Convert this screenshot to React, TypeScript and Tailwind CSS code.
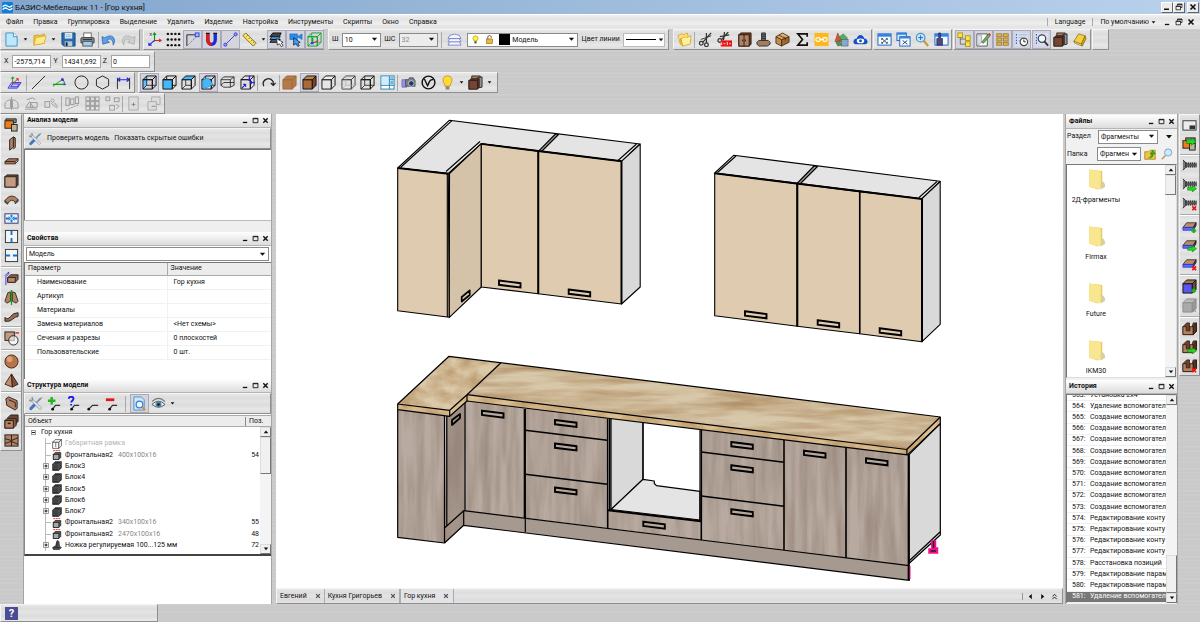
import React from "react";

type Kids = { children?: React.ReactNode };

/* ---------- textures ---------- */
const METAL =
  "bg-[#c7c7c7] bg-[repeating-linear-gradient(180deg,rgba(255,255,255,0.12)_0px,rgba(255,255,255,0.02)_2px,rgba(255,255,255,0.09)_3px,rgba(255,255,255,0.02)_5px,rgba(255,255,255,0.13)_7px,rgba(255,255,255,0.01)_9px,rgba(255,255,255,0.12)_11px)]";
const BAR =
  "bg-[#dfdfdf] bg-[repeating-linear-gradient(180deg,rgba(255,255,255,0.26)_0px,rgba(0,0,0,0.01)_4px,rgba(255,255,255,0.16)_7px,rgba(0,0,0,0.015)_11px,rgba(255,255,255,0.26)_15px)] border border-t-[#f4f4f4] border-l-[#f4f4f4] border-r-[#8f8f8f] border-b-[#8f8f8f]";

/* ---------- icon helpers ---------- */
const Cube = ({ f = "none", s = "none", t = "none", c = "#111", inner = false, children }: { f?: string; s?: string; t?: string; c?: string; inner?: boolean } & Kids) => (
  <g stroke={c} strokeWidth="1" strokeLinejoin="round">
    <path d="M1 5H11V15H1Z" fill={f} />
    <path d="M1 5L5 1H15L11 5Z" fill={t} />
    <path d="M11 5L15 1V11L11 15Z" fill={s} />
    {inner && <path d="M5 1V11H15M5 11L1 15" fill="none" strokeWidth="0.8" />}
    {children}
  </g>
);
const WinFrame = ({ children }: Kids) => (
  <g>
    <rect x="1" y="2" width="14" height="12" fill="#f4f8ff" stroke="#1a62c0" />
    <rect x="1" y="2" width="14" height="3" fill="#2f86e8" />
    {children}
  </g>
);
const Cross4 = ({ c = "#456" }: { c?: string }) => (
  <path d="M5 7L11 12M11 7L5 12M5 8.5V7H6.5M9.500 7H11V8.500M11 10.500V12H9.500M6.500 12H5V10.500" stroke={c} fill="none" strokeWidth="1" />
);
const Board = ({ children }: Kids) => (
  <g stroke="#222" strokeWidth="0.8">
    <path d="M1 9L5 4H15L12 9Z" fill="#b98a6c" />
    <path d="M12 9L15 4V7L12 12Z" fill="#5a3a28" />
    <path d="M1 9H12V12H1Z" fill="#5b6cff" stroke="#2233cc" />
    {children}
  </g>
);
const Screw = ({ children }: Kids) => (
  <g>
    <path d="M1 2L4 5V10L1 13" stroke="#222" fill="#777" />
    <path d="M4 7.500H15.500" stroke="#222" strokeWidth="5.500" strokeDasharray="1.500 0.700" />
    <path d="M4 7.500H15.500" stroke="#555" strokeWidth="3" />
    {children}
  </g>
);
const Groove = ({ children }: Kids) => (
  <g stroke="#2a1a10" strokeWidth="0.8" strokeLinejoin="round">
    <path d="M1 6L5 2H8L8 8H10L12 2H15.500V11L12 14.500H1Z" fill="#6b422d" />
    <path d="M1 6H4.500V10.500H8.500V6H12V14.500H1Z" fill="#b5805f" />
    <path d="M12 6L15.500 2V11L12 14.500Z" fill="#54321f" />
    {children}
  </g>
);
const Arrow = () => <path d="M6 11H11V9L15.500 12.500L11 16V14H6Z" fill="#1fdc1f" stroke="#0a7a0a" strokeWidth="0.6" />;
const RedX = () => <path d="M11 11L15 15M15 11L11 15" stroke="#e11" strokeWidth="1.800" fill="none" />;
const Plus = () => <path d="M12.500 10V15M10 12.500H15" stroke="#1db31d" strokeWidth="2.400" fill="none" />;
const Cabinets = () => (
  <g stroke="#222" strokeWidth="0.9">
    <path d="M4 1H13V6H4Z" fill="#b37a52" />
    <path d="M10 3L15 2V13L10 14Z" fill="#8d9494" />
    <path d="M1 6L3 4H12V13L10 15H1Z" fill="#5b2f22" />
    <rect x="1" y="6" width="9" height="9" fill="#7a4330" />
  </g>
);
const Wrench = () => (
  <g strokeLinecap="round" fill="none">
    <path d="M13 3L4 12" stroke="#7d97b5" strokeWidth="2" />
    <path d="M7 9.500L3 13.500" stroke="#3f78bd" strokeWidth="3.200" />
    <path d="M4 4L13 13" stroke="#8a939e" strokeWidth="3" />
    <path d="M4 4L13 13" stroke="#e6ebf1" strokeWidth="1.700" />
    <path d="M1.500 4.500C2.500 6.500 6 5 4.500 1.500M14.500 2L12 4" stroke="#8a939e" strokeWidth="1.300" />
  </g>
);

const G: Record<string, React.ReactNode> = {
  new: <g><path d="M2 1H10L14 5V15H2Z" fill="#bfe6fb" stroke="#3b94c4" /><path d="M10 1V5H14" fill="#fff" stroke="#3b94c4" /></g>,
  open: <g><path d="M2 14V4L7 3L8 4L13 2V12Z" fill="#f0c640" stroke="#c79a20" strokeWidth="0.800" /><path d="M2 14L4 6L15 4L13 12Z" fill="#ffe98a" stroke="#d6aa2a" strokeWidth="0.800" /></g>,
  save: <g><path d="M1 1H15V15H3L1 13Z" fill="#2669ad" stroke="#174a80" /><rect x="4" y="1" width="8" height="6" fill="#dfe9f3" /><path d="M5 3H11M5 5H11" stroke="#8aa" strokeWidth="0.700" /><rect x="4" y="10" width="8" height="5" fill="#b9c9d9" /><rect x="5" y="11" width="2" height="4" fill="#123" /></g>,
  print: <g><rect x="4" y="1" width="8" height="5" fill="#fff" stroke="#666" /><rect x="1" y="6" width="14" height="6" rx="1" fill="#7d8894" stroke="#444" /><rect x="3" y="10" width="10" height="5" fill="#9ed0f2" stroke="#555" /><path d="M3 8H13" stroke="#333" /></g>,
  undo: <path d="M1 5L2 13L9 11L6.500 9C9 6 13 7 13 14C17 7 12 1 4 6Z" fill="#5f9fe6" stroke="#2a66b0" strokeWidth="0.800" />,
  redo: <path d="M15 5L14 13L7 11L9.500 9C7 6 3 7 3 14C-1 7 4 1 12 6Z" fill="#cfcfcf" stroke="#aaa" strokeWidth="0.800" />,
  axes: <g fill="none" strokeWidth="1.200"><path d="M8 10V1M6.500 3L8 1L9.500 3" stroke="#0a9a1a" /><path d="M8 9H15M13 7.500L15 9L13 10.500" stroke="#e02020" /><path d="M8 9L2 14M2 11.500V14H5" stroke="#2222dd" /><path d="M3 1L5 4M5 1L3 4" stroke="#444" strokeWidth="0.700" /></g>,
  dots: <g fill="#111">{[2, 8, 14].map((y) => [2, 6, 10, 14].map((x) => <circle key={x + "-" + y} cx={x} cy={y} r="1.300" />))}</g>,
  corner: <g><path d="M2 15V3H12" fill="none" stroke="#222" /><path d="M3 14L13 4" stroke="#777" strokeDasharray="1.500 1" /><rect x="11" y="1" width="4" height="4" fill="#aab4ff" stroke="#3344dd" /></g>,
  magnet: <g fill="none" strokeWidth="3.600"><path d="M4 1V8C4 15 12 15 12 8V1" stroke="#1c2ccc" /><path d="M4 1V8C4 11 6 13.200 8 13.200" stroke="#e01818" /><path d="M2 1.500H6M10 1.500H14" stroke="#111" strokeWidth="1.500" /></g>,
  segment: <g><path d="M2 14L14 2" stroke="#3a3ab8" /><circle cx="2.500" cy="13.500" r="1.700" fill="#8d95ff" stroke="#33c" strokeWidth="0.800" /><circle cx="13.500" cy="2.500" r="1.700" fill="#8d95ff" stroke="#33c" strokeWidth="0.800" /></g>,
  ruler: <g><path d="M1 4L4 1L15 12L12 15Z" fill="#ffe766" stroke="#77681a" /><path d="M6 3.500L4.500 5M8.500 6L7 7.500M11 8.500L9.500 10M13 10.500L11.500 12" stroke="#554" strokeWidth="0.800" /></g>,
  layerPick: <g><path d="M1 5L4 1H13L11 5Z" fill="#444" stroke="#111" /><path d="M1 8L3 5H12L10 8Z" fill="#3a96e8" stroke="#124" /><path d="M1 11L3 8H12L10 11Z" fill="#555" stroke="#111" /><path d="M8 7L9 14L11 12.500L13 15.500L15 14.500L13 12L15 11Z" fill="#fff" stroke="#222" strokeWidth="0.800" /></g>,
  camPick: <g><path d="M2 2H10V8H2ZM10 5L15 2V8Z" fill="#2b8cf0" stroke="#135cb0" strokeWidth="0.600" /><path d="M6 6L6 14L8.500 12.500L10.500 15.500L12 14.500L10.500 12L13 11Z" fill="#38a0ff" stroke="#123" strokeWidth="0.800" /></g>,
  cubeGreen: <Cube c="#13a32b" inner><path d="M6 12L12 9" stroke="#d22" /><path d="M6 6V12" stroke="#13a32b" strokeWidth="1.500" /><path d="M4 11H7V13H4Z" fill="#33f" stroke="none" /></Cube>,
  layers: <g fill="#f3f4ff" stroke="#7f86c8"><path d="M1 14L3 10H13L15 14Z" /><path d="M1 10.500L3 7H13L15 10.500Z" /><path d="M1 7L3 3.500Q8 1 13 3.500L15 7Z" /></g>,
  bulb: <g><circle cx="8" cy="6" r="4.600" fill="#fff23a" stroke="#a58d0a" /><path d="M6 11H10V15H6Z" fill="#555" /></g>,
  bulbBig: <g><path d="M8 1C3 1 2 6 4.500 9L5.500 12H10.500L11.500 9C14 6 13 1 8 1Z" fill="#ffd83a" stroke="#c89a10" /><path d="M6 12H10V15.500H6Z" fill="#888" /></g>,
  lock: <g><path d="M5 7V4C5 0 11 0 11 4V5" fill="none" stroke="#333" strokeWidth="1.500" /><rect x="3" y="7" width="10" height="8" fill="#f3b62c" stroke="#7a5408" /></g>,
  folders: <g stroke="#d2a21c" strokeWidth="0.800"><path d="M1 4L5 2L7 3L11 1L13 11L4 13Z" fill="#ffe27a" /><path d="M4 7L9 5L10 6L15 4L14 13L6 15Z" fill="#ffef9e" /><path d="M4 7L6 15L3 12Z" fill="#f2c843" /></g>,
  scissors: <g fill="none" stroke="#333" strokeWidth="1.300"><path d="M14 1L5 11M9 1L9 12" /><circle cx="3.500" cy="12" r="2" /><circle cx="9" cy="13.500" r="2" /><path d="M3 8L14 4" strokeWidth="1" /></g>,
  scissorsBeta: <g fill="none" stroke="#333" strokeWidth="1.300"><path d="M12 0L5 8M8 0L7 9M3 5L13 3" /><circle cx="3" cy="9" r="2" /><rect x="4" y="9" width="12" height="6.500" fill="#ee1111" stroke="none" /><path d="M5 11V14M7 12.500H9M11 10.500V14M13 12.500H15" stroke="#fff" strokeWidth="0.900" /></g>,
  wardrobe: <g stroke="#33190c"><path d="M2 3L4 1H15V13L13 15H2Z" fill="#6a4430" /><rect x="2" y="3" width="11" height="12" fill="#b08468" /><path d="M7.500 3V15M6 8V10M9 8V10" /></g>,
  leg: <g stroke="#222" strokeWidth="0.900"><path d="M6 1H10V10H6Z" fill="#777" /><path d="M6 3H10M6 5H10M6 7H10" /><path d="M1 11L3 9H13L15 11V13L12 15H3L1 13Z" fill="#a57c60" /></g>,
  box: <g stroke="#472c10" strokeWidth="0.900"><path d="M1 5L7 8V15L1 12Z" fill="#c58c4e" /><path d="M7 8L15 5V11L7 15Z" fill="#9d672f" /><path d="M1 5L8 1L15 5L7 8Z" fill="#e0ae72" /><path d="M4 3.500L11 6.500V9" fill="none" /></g>,
  sigma: <path d="M13 5V2H3L8 8L3 14H13V11" fill="none" stroke="#111" strokeWidth="1.800" />,
  link: <g><rect x="0.500" y="1" width="15" height="14" fill="#ffb81c" /><g fill="none" stroke="#fff" strokeWidth="1.200"><rect x="2" y="6" width="5" height="4" rx="2" /><rect x="9" y="6" width="5" height="4" rx="2" /><path d="M5.500 8H10.500" /></g></g>,
  shapes: <g stroke="#444" strokeWidth="0.500"><path d="M4 1L8 10H1Z" fill="#e2502f" /><path d="M6 5L10 2L14 6V10L9 11Z" fill="#45b757" /><rect x="8" y="8" width="7" height="7" fill="#86a8d4" /><path d="M2 11L6 9L8 14L4 15Z" fill="#4c9a3d" /></g>,
  cloudEye: <g><path d="M3 13C-1 13 0 7 4 7C5 2 11 2 12 7C16 7 17 13 13 13Z" fill="#1450c8" /><ellipse cx="8" cy="9.500" rx="4" ry="2.500" fill="#fff" /><circle cx="8" cy="9.500" r="1.500" fill="#1450c8" /></g>,
  fit: <WinFrame><Cross4 /></WinFrame>,
  fitAll: <g><rect x="1" y="1" width="10" height="8" fill="#dce9fb" stroke="#1a62c0" /><rect x="4" y="5" width="11" height="10" fill="#f4f8ff" stroke="#1a62c0" /><path d="M4 6H15M1 2H11" stroke="#2f86e8" strokeWidth="2" /><path d="M7 9L12 13M12 9L7 13" stroke="#345" /></g>,
  zoomIn: <g><path d="M9 9L14 15" stroke="#d09a3a" strokeWidth="2.500" /><circle cx="6" cy="6" r="4.600" fill="#c7e7fb" stroke="#4a95cc" strokeWidth="1.300" /><path d="M6 3.500V8.500M3.500 6H8.500" stroke="#1a62c0" /></g>,
  brush: <WinFrame><path d="M5 1H7V7H9V14H3V7H5Z" fill="#4a4a90" stroke="#223" strokeWidth="0.700" /></WinFrame>,
  tree: <g fill="#ffe33d" stroke="#a28604" strokeWidth="0.800"><rect x="1" y="1" width="5" height="5" /><rect x="9" y="4" width="5" height="5" /><rect x="9" y="10.500" width="5" height="5" /><path d="M3.500 6V13H9M3.500 7.500H9" fill="none" stroke="#555" /></g>,
  note: <g><path d="M1 2H12V15H1Z" fill="#fff" stroke="#555" /><path d="M1 3L1 15L6 11V3Z" fill="#d8dfe8" stroke="#888" strokeWidth="0.600" /><path d="M6 11L13 2L15 4L8 12Z" fill="#5fb747" stroke="#345" strokeWidth="0.600" /><path d="M13 2L14 1L16 3L15 4Z" fill="#e22" /></g>,
  wall: <g><rect x="1" y="1" width="14" height="14" fill="#b9b9b9" /><g fill="#e4b54d" stroke="#9c741d" strokeWidth="0.700"><rect x="2" y="2" width="5" height="3" /><rect x="9" y="2" width="5" height="3" /><rect x="2" y="6.500" width="5" height="3" /><rect x="9" y="6.500" width="5" height="3" /><rect x="2" y="11" width="5" height="3" /><rect x="9" y="11" width="5" height="3" /></g></g>,
  hist: <g><rect x="1" y="1" width="14" height="14" fill="#d5def2" /><path d="M2 3H3M2 6H3M2 9H3M2 12H3" stroke="#1a3fcc" strokeWidth="1.500" /><path d="M5 3H14M5 6H9M5 9H7" stroke="#9ab" strokeWidth="0.800" /><circle cx="10.500" cy="10.500" r="4" fill="#fff" stroke="#444" strokeWidth="1.200" /><path d="M10.500 8V10.500H12.500" stroke="#222" fill="none" /></g>,
  find: <g><rect x="1" y="1" width="14" height="14" fill="#d5def2" /><path d="M2 3H3M2 6H3M2 9H3M2 12H3" stroke="#1a3fcc" strokeWidth="1.500" /><circle cx="8.500" cy="7" r="4" fill="#eef8ff" stroke="#444" strokeWidth="1.300" /><path d="M11 10L15 14.500" stroke="#333" strokeWidth="2" /></g>,
  cabinets: <Cabinets />,
  book: <g stroke="#8d6d0d" strokeWidth="0.800"><path d="M2 10L7 2L14 4L10 13Z" fill="#f4cf3f" /><path d="M2 10L10 13L11 15L3 12Z" fill="#fff6cf" /><path d="M14 4L15 7L11 15L10 13Z" fill="#d3a41a" /></g>,
  sketch: <g><path d="M1 14L5 8H15L11 14Z" fill="#c9c9ff" stroke="#3a3ad8" /><path d="M4 12.500L6 9.500H13L11 12.500Z" fill="none" stroke="#3a3ad8" /><path d="M6 10V2M4.500 4L6 2L7.500 4" stroke="#0a9a1a" fill="none" /><path d="M6 9L12 4M9.500 4H12V6.500" stroke="#e02020" fill="none" /></g>,
  line: <path d="M1 15L15 1" stroke="#222" />,
  angle: <g fill="none"><path d="M1 10H15" stroke="#18a018" strokeWidth="1.300" /><path d="M1 12L12 4" stroke="#18a018" /><path d="M11 4Q14 7 13 11" stroke="#33c" /><circle cx="11" cy="5" r="1.500" fill="#33c" /></g>,
  circle: <circle cx="8" cy="8" r="7" fill="none" stroke="#222" />,
  hexagon: <path d="M8 1L14.500 4.500V11.500L8 15L1.500 11.500V4.500Z" fill="none" stroke="#222" />,
  dim: <g fill="none"><path d="M1.500 3V15M14.500 3V15" stroke="#222" /><path d="M2 5H14M4.500 3L2 5L4.500 7M11.500 3L14 5L11.500 7" stroke="#2222dd" strokeWidth="1.200" /></g>,
  vLeft: <g><path d="M1 5L5 1V11L1 15Z" fill="#5cc3ff" /><Cube inner /></g>,
  vFront: <Cube f="#45b8fb"><path d="M5 1V5M11 11H15" /></Cube>,
  vTop: <Cube t="#45b8fb"><path d="M5 5V11H11M5 11L1 15" fill="none" strokeWidth="0.8" /></Cube>,
  vPersp: <Cube inner><path d="M2 5L8 3L13 10L7 13L2 15Z" fill="#45b8fb" stroke="#1b7fc0" strokeWidth="0.500" /></Cube>,
  vWire: <g fill="none" stroke="#222" strokeWidth="0.900"><path d="M1 5L4 2H15V11L11 13H4L1 11ZM1 5H11V13M11 5L15 2M4 8H15M1 11L4 8" /></g>,
  vMove: <Cube><path d="M10 1V6M8.500 4.500L10 6L11.500 4.500M16 8H11M12.500 6.500L11 8L12.500 9.500M2 14L6 10M3.500 10H6V12.500" fill="none" stroke="#22d" strokeWidth="1.300" /></Cube>,
  rotate: <path d="M3 12C0 5 9 1 13 7V10M10.500 8.500L13 11L15.500 8.500" fill="none" stroke="#222" strokeWidth="1.300" />,
  wood1: <Cube f="#b47b49" t="#b47b49" s="#b47b49" c="#a06a3c" />,
  wood2: <Cube f="#a9693a" t="#c3834f" s="#7e4620" />,
  box1: <Cube f="#e6e6e6" t="#eee" s="#ddd" />,
  box2: <Cube c="#444"><path d="M5 1V11H15M5 11L1 15" fill="none" stroke="#aaa" strokeWidth="0.700" /></Cube>,
  box3: <Cube inner />,
  panes: <g><rect x="1" y="1" width="14" height="14" fill="#fff" stroke="#2a7fb0" /><rect x="2" y="2" width="8" height="8" fill="#cfeefa" /><path d="M10 1V15M1 11H15M10 5H15" stroke="#2a7fb0" /><path d="M11 2H14V4H11ZM11 6H14V10H11Z" fill="#5fb9e0" /></g>,
  camera: <g><path d="M1 5H6V13H1Z" fill="#9a92e0" stroke="#6058b8" strokeWidth="0.700" /><path d="M5 5H8L9 3H13L15 6V12H5Z" fill="#7b828a" stroke="#333" strokeWidth="0.700" /><circle cx="11" cy="9" r="3" fill="#223a66" stroke="#ccc" /></g>,
  vray: <g fill="none" stroke="#111" strokeWidth="1.500"><circle cx="8" cy="8" r="6.800" /><path d="M3.500 4L7 11.500C9 9 8 4 13 5" /></g>,
  mirror: <g fill="none" stroke="#999"><path d="M8 1V15" /><path d="M7 4Q1 5 1 9V13H7ZM9 4Q15 5 15 9V13H9Z" /></g>,
  mv: <g fill="none" stroke="#999"><path d="M1 14H14M2 12L6 6L10 12Z" /><rect x="7" y="7" width="7" height="5" /><path d="M3 4L9 2L12 4" /></g>,
  rot: <g fill="none" stroke="#999"><rect x="1" y="6" width="5" height="6" /><path d="M7 5L9 3L11 5L9 7ZM8 8L14 13M11 7L15 12" /></g>,
  align: <g fill="none" stroke="#999"><path d="M1 15L15 9" strokeDasharray="2 1" /><rect x="1" y="2" width="3.500" height="8" /><rect x="6" y="3" width="3.500" height="6" /><rect x="11" y="1" width="3.500" height="7" /></g>,
  grid9: <g fill="none" stroke="#999">{[1, 6, 11].map((x) => [1, 6, 11].map((y) => <rect key={x + "-" + y} x={x} y={y} width="4" height="4" />))}</g>,
  scatter: <g fill="none" stroke="#999"><rect x="1" y="1" width="4" height="4" /><rect x="10" y="2" width="5" height="4" /><rect x="5" y="10" width="5" height="5" /><path d="M12 9L15 11L12 14" /></g>,
  doc: <g fill="#ddd" stroke="#aaa"><path d="M3 1H13V15H3Z" /><path d="M6 9H10M8 7V11" stroke="#888" /></g>,
  docs: <g fill="#ddd" stroke="#aaa"><path d="M6 1H15V9H6Z" /><path d="M2 6H11V15H2Z" /><path d="M6 11H10" stroke="#888" /></g>,
  sel: <g stroke="#222"><path d="M2 2H13V6H2Z" fill="#888" /><rect x="1" y="4" width="9" height="8" fill="#f07c16" /><rect x="8" y="8" width="6" height="7" fill="#bdb494" /></g>,
  vboard: <path d="M6 4L10 1V12L6 15Z M10 1L12 2V12L10 14" fill="#b08063" stroke="#222" />,
  hboard: <path d="M1 8L5 5H15L12 8ZM1 8V10.500H12V8M12 10.500L15 7.500V5" fill="#b5714f" stroke="#222" strokeWidth="0.900" />,
  front: <g stroke="#222"><path d="M1 4L3 2H15V13L13 15H1Z" fill="#6a4a38" /><rect x="1" y="4" width="12" height="11" fill="#c59b80" /></g>,
  arc: <path d="M1 9Q8 0 15 8L12 11Q8 6 4 12Z M1 9V11L4 13V12M15 8V10L12 12.500V11" fill="#b5805f" stroke="#222" strokeWidth="0.900" />,
  fill: <g><rect x="1" y="3" width="14" height="10" fill="#eaf4ff" stroke="#336" /><path d="M2 8H6M14 8H10M8 4V7M8 12V9" stroke="#1673d2" strokeWidth="2" /><path d="M5 6L7 8L5 10M11 6L9 8L11 10" stroke="#1673d2" fill="none" /></g>,
  splitV: <g><rect x="1.500" y="1.500" width="13" height="13" fill="#f3f6f9" stroke="#333" /><path d="M8 2V6.500M8 9.500V14" stroke="#1673d2" strokeWidth="2" /></g>,
  splitH: <g><rect x="1.500" y="1.500" width="13" height="13" fill="#f3f6f9" stroke="#333" /><path d="M2 8H6.500M9.500 8H14" stroke="#1673d2" strokeWidth="2" /></g>,
  plank: <g stroke="#222" strokeWidth="0.900"><path d="M4 7L7 4H15V9L12 12H4Z" fill="#8a5c41" /><rect x="4" y="7" width="8" height="5" fill="#bb8667" /><path d="M1 5L5 1V3L2 6V15" fill="none" stroke="#22c" /></g>,
  mirrorG: <g stroke="#222" strokeWidth="0.900"><path d="M7 2L4 3L1 12L3 14L7 12ZM9 2L12 3L15 12L13 14L9 12Z" fill="#b5805f" /><path d="M8 0V16" stroke="#13a313" strokeWidth="1.500" /></g>,
  wave: <path d="M1 9Q4 12 7 8T15 4V8Q12 8 9 11T1 13Z" fill="#a06c4c" stroke="#222" />,
  cut: <g stroke="#222"><rect x="1" y="1" width="10" height="9" fill="#c59b80" /><circle cx="10" cy="10" r="5" fill="#fff" fillOpacity=".6" /><path d="M12 2H16" stroke="#d22" strokeWidth="1.500" /></g>,
  sphere: <g><circle cx="8" cy="8" r="7" fill="#b5754a" stroke="#4a2a16" /><circle cx="6" cy="5.500" r="3" fill="#dba27a" /></g>,
  pyramid: <g stroke="#33190c" strokeWidth="0.900"><path d="M8 1L1 12L9 15Z" fill="#c08c6c" /><path d="M8 1L15 12L9 15Z" fill="#7d523a" /></g>,
  panel: <path d="M2 3L5 1L14 5V13L12 15L3 10Z M5 4L12 7V12" fill="#b5805f" stroke="#222" />,
  drawer: <g stroke="#222"><path d="M4 4L7 1H15V8L12 11H4Z" fill="#70452f" /><path d="M1 7L3 5H13V12L10 15H1Z" fill="#8a5a3c" /><rect x="1" y="7" width="9" height="8" fill="#b5805f" /><path d="M4 10H7" strokeWidth="1.500" /></g>,
  crate: <g stroke="#222"><rect x="1" y="2" width="14" height="12" fill="#b5805f" /><path d="M8 2V14M1 6L8 8L15 5M1 11L8 9L15 12" fill="none" /></g>,
  screenR: <g><rect x="1" y="4" width="14" height="10" fill="#ececec" stroke="#333" /><rect x="8" y="9" width="6" height="4" fill="#333" /></g>,
  orangeGo: <g stroke="#222"><rect x="4" y="2" width="10" height="10" fill="#888" /><rect x="1" y="5" width="9" height="8" fill="#f07c16" /><rect x="8" y="8" width="6" height="7" fill="#bdb494" /><path d="M5 4H10V2L15 6L10 10V8H5Z" fill="#1fdc1f" stroke="#0a7a0a" strokeWidth="0.600" /></g>,
  screw: <Screw />, screwGo: <Screw><Arrow /></Screw>, screwX: <Screw><RedX /></Screw>,
  board: <Board><Plus /></Board>, boardGo: <Board><Arrow /></Board>, boardX: <Board><RedX /></Board>,
  blueCube: <Cube f="#5a55ee" t="#a57455" s="#6a4a38"><Plus /></Cube>,
  grayCube: <Cube f="#aaa" t="#bbb" s="#999" c="#8d8d8d"><path d="M12 12L15 15M15 12L12 15" /></Cube>,
  groove: <Groove />, grooveGo: <Groove><Arrow /></Groove>, grooveX: <Groove><RedX /></Groove>,
  wrench: <Wrench />,
  addN: <g fill="none"><path d="M5 1V9M1 5H9" stroke="#23b523" strokeWidth="2.600" /><path d="M6 14L9 10H14" stroke="#333" strokeWidth="1.300" /><circle cx="6" cy="14" r="1.500" fill="#111" /></g>,
  askN: <g fill="none"><path d="M3 3C3 0 8 0 8 3C8 5 5.500 5 5.500 7M5.500 8.500V10" stroke="#1a1aee" strokeWidth="2" /><path d="M6 14L9 10H14" stroke="#333" strokeWidth="1.300" /><circle cx="6" cy="14" r="1.500" fill="#111" /></g>,
  nodeN: <g fill="none"><path d="M4 14L8 10H14" stroke="#333" strokeWidth="1.300" /><circle cx="4" cy="14" r="1.500" fill="#111" /></g>,
  delN: <g fill="none"><path d="M2 4H11" stroke="#e01818" strokeWidth="3" /><path d="M6 14L9 10H14" stroke="#333" strokeWidth="1.300" /><circle cx="6" cy="14" r="1.500" fill="#111" /></g>,
  preview: <g><path d="M2 1H10L13 4V15H2Z" fill="#cfe6fa" stroke="#4a90c8" /><circle cx="8" cy="9" r="3.600" fill="#e8f6ff" stroke="#3a7fc0" strokeWidth="1.300" /><path d="M11 12L14 15" stroke="#e08a2a" strokeWidth="2" /></g>,
  eye: <g><path d="M1 9Q8 2 15 9Q8 15 1 9Z" fill="#e8eef2" stroke="#555" /><circle cx="8" cy="9" r="3.200" fill="#4c87a8" /><circle cx="8" cy="9" r="1.300" fill="#111" /><path d="M1 6Q8 -1 15 6" fill="none" stroke="#777" strokeWidth="1.300" /></g>,
  upFolder: <g><path d="M1 5H6L8 3H15V15H1Z" fill="#f2c640" stroke="#a27d14" /><path d="M6 13Q10 13 10 8H8L11.500 3L15 8H12.500Q12 14 6 13Z" fill="#27b327" stroke="#0a6a0a" strokeWidth="0.500" /></g>,
  magnify: <g><path d="M6 10L1 15" stroke="#c79a5a" strokeWidth="2.200" /><circle cx="9.500" cy="6" r="4.800" fill="#cfe9fc" stroke="#7ba3c8" strokeWidth="1.300" /></g>,
  folder: <g><path d="M3 1L12 2V13L9 15L3 13Z" fill="#e8cc5a" /><path d="M3 1L11 2.500V15L3 13Z" fill="#f8e691" /><path d="M11 9Q14 9 14 13L11 15Z" fill="#d9cf9c" /></g>,
  treeFrame: <Cube f="#fff" t="#fff" s="#fff" c="#222"><path d="M6 6V13" /></Cube>,
  treePanel: <g><path d="M2 1H14" stroke="#e22" strokeWidth="1.500" strokeDasharray="3 1" /><path d="M2 7L5 4H14V12L11 15H2Z" fill="#555" stroke="#111" /><rect x="2" y="7" width="9" height="8" fill="#a7a7a7" stroke="#111" /></g>,
  treeBlock: <g><path d="M1 5L5 1H15V11L11 15H1Z" fill="#333" stroke="#111" /><path d="M1 5H11L15 1M11 5V15M1 8H11L15 4M1 11.500H11L15 7.500" stroke="#777" strokeWidth="0.800" fill="none" /></g>,
  treeLeg: <path d="M8 1L11 2L12 10L15 12L12 15H2L1 12L6 9Z M8 3V11M3 12H12" fill="#555" stroke="#111" />,
  logo: <g><rect width="16" height="16" rx="2" fill="#0f7fd6" /><path d="M1 7Q4 3 8 6T15 5M1 11Q4 7 8 10T15 9" fill="none" stroke="#fff" strokeWidth="1.800" /></g>,
  min: <path d="M2 12.500H12" stroke="#111" strokeWidth="3" />,
  max: <path d="M2.500 3H13.500V13H2.500ZM2 4H14" fill="none" stroke="#111" strokeWidth="2" />,
  restore: <path d="M5 5V2H14V9H11M2 6H11V13.500H2ZM2 7H11M5 3H14" fill="none" stroke="#111" strokeWidth="1.500" />,
  close: <path d="M3 3L13 13M13 3L3 13" stroke="#111" strokeWidth="3.200" />,
  down: <path d="M2 4H14L8 11Z" fill="#111" />,
  up: <path d="M2 11H14L8 4Z" fill="#111" />,
  left: <path d="M11 2V14L4 8Z" fill="#111" />,
  right: <path d="M5 2V14L12 8Z" fill="#111" />,
  dblUp: <path d="M3 8L8 3L13 8M3 14L8 9L13 14" fill="none" stroke="#111" strokeWidth="2" />,
};

const Ico = ({ n, className = "size-4" }: { n: string; className?: string }) => (
  <svg viewBox="0 0 16 16" className={className + " shrink-0"} aria-hidden="true">{G[n]}</svg>
);

const TB = ({ n, label, on }: { n: string; label: string; on?: boolean }) => (
  <button type="button" aria-label={label} className={"flex h-[19px] w-[19px] shrink-0 items-center justify-center border " + (on ? "border-[#a9a9bb] bg-[#d4d4dc]" : "border-transparent")}>
    <Ico n={n} className="size-[15px]" />
  </button>
);
const Drop = ({ label }: { label: string }) => (
  <button type="button" aria-label={label} className="flex h-4 w-2 shrink-0 items-center justify-center"><Ico n="down" className="size-[5px]" /></button>
);
const Sep = () => <span className="h-4 w-px shrink-0 bg-[#aaa]" />;
const HSep = () => <span className="my-px h-[2px] w-full shrink-0 border-t border-t-[#aaa] bg-white" />;

const Select = ({ label, value, className = "", muted, left }: { label: string; value: string; className?: string; muted?: boolean; left?: React.ReactNode }) => (
  <div className={"flex h-[14px] items-center border border-[#8a8a8a] " + (muted ? "bg-[#ececec] text-[#8a8a8a] " : "bg-white ") + className}>
    {left}
    <select aria-label={label} disabled={muted} defaultValue={value} className="h-3 min-w-0 flex-1 appearance-none bg-transparent pl-[2px] leading-[10px] outline-none">
      <option value={value}>{value}</option>
    </select>
    <Ico n="down" className="mx-[2px] size-[7px]" />
  </div>
);

const PanelHead = ({ title }: { title: string }) => (
  <header className="flex h-[14px] shrink-0 items-center border-b border-[#b5b5b5] bg-linear-to-b from-white to-[#dcdcdc] pr-[2px] pl-[3px]">
    <h2 className="flex-1 font-bold">{title}</h2>
    <div className="flex gap-[3px]">
      <button type="button" aria-label="Свернуть"><Ico n="min" className="size-[7px]" /></button>
      <button type="button" aria-label="Развернуть"><Ico n="max" className="size-[7px]" /></button>
      <button type="button" aria-label="Закрыть"><Ico n="close" className="size-[7px]" /></button>
    </div>
  </header>
);

const Scroll = ({ thumb }: { thumb: string }) => (
  <div className="flex w-[11px] shrink-0 flex-col bg-[#f4f4f4]">
    <button type="button" aria-label="Вверх" className="flex h-[10px] items-center justify-center border border-[#ddd] border-r-[#777] border-b-[#777] bg-[#f0f0f0]"><Ico n="up" className="size-[6px]" /></button>
    <div className="flex flex-1 flex-col"><div className={"border border-[#ddd] border-r-[#777] border-b-[#777] bg-[#f0f0f0] " + thumb} /></div>
    <button type="button" aria-label="Вниз" className="flex h-[10px] items-center justify-center border border-[#ddd] border-r-[#777] border-b-[#777] bg-[#f0f0f0]"><Ico n="down" className="size-[6px]" /></button>
  </div>
);

/* ---------- furniture drawing ---------- */
const Handle = ({ x, y, fill = "#dfccb0" }: { x: number; y: number; fill?: string }) => (
  <path d={`M${x} ${y}l21.500 2.700v4.300l-21.500 -2.700z`} fill={fill} stroke="#000" strokeWidth="1.900" />
);

const Kitchen = () => (
  <svg viewBox="276 114 787 473" className="block h-auto w-full bg-white" role="img" aria-label="Модель кухни">
    <defs>
      <filter id="oak" x="0" y="0" width="100%" height="100%" colorInterpolationFilters="sRGB">
        <feTurbulence type="fractalNoise" baseFrequency="0.120 0.012" numOctaves="3" seed="4" result="n" />
        <feColorMatrix in="n" type="matrix" values="0 0 0 0 0.540  0 0 0 0 0.470  0 0 0 0 0.420  1.100 0 0 0 -0.350" result="c" />
        <feComposite in="c" in2="SourceAlpha" operator="in" result="m" />
        <feMerge><feMergeNode in="SourceGraphic" /><feMergeNode in="m" /></feMerge>
      </filter>
      <filter id="stone" x="0" y="0" width="100%" height="100%" colorInterpolationFilters="sRGB">
        <feTurbulence type="fractalNoise" baseFrequency="0.014 0.120" numOctaves="4" seed="9" result="n" />
        <feColorMatrix in="n" type="matrix" values="0 0 0 0 0.700  0 0 0 0 0.570  0 0 0 0 0.410  1.800 0 0 0 -0.560" result="c" />
        <feComposite in="c" in2="SourceAlpha" operator="in" result="m" />
        <feMerge><feMergeNode in="SourceGraphic" /><feMergeNode in="m" /></feMerge>
      </filter>
      <filter id="stoneSpot" x="0" y="0" width="100%" height="100%" colorInterpolationFilters="sRGB">
        <feTurbulence type="fractalNoise" baseFrequency="0.050 0.080" numOctaves="4" seed="3" result="n" />
        <feColorMatrix in="n" type="matrix" values="0 0 0 0 0.710  0 0 0 0 0.570  0 0 0 0 0.400  1.700 0 0 0 -0.560" result="c" />
        <feComposite in="c" in2="SourceAlpha" operator="in" result="m" />
        <feMerge><feMergeNode in="SourceGraphic" /><feMergeNode in="m" /></feMerge>
      </filter>
    </defs>

    {/* upper corner section */}
    <g stroke="#000" strokeWidth="1.100" strokeLinejoin="round">
      <path d="M449.300 120.300L640 144L621.700 161.300L481.300 143.700L448.300 173.500L397.700 168Z" fill="#e4e4e4" />
      <path d="M397.700 168L448.300 173.500L449.300 317.300L397.700 310.700Z" fill="#dfccb0" />
      <path d="M449.500 173.500L481.300 143.700V287L449.300 317.300Z" fill="#d4c2a9" />
      <path d="M481.300 143.700L538.300 151.300V293.700L481.300 287Z" fill="#dfccb0" />
      <path d="M538.300 151.300L621.500 161.300V304L538.300 293.700Z" fill="#dfccb0" />
      <path d="M621.500 161.300L640.200 144V287L621.500 304Z" fill="#d9d9d9" />
      <path d="M447.300 174V317M400.500 167.500L452 120.700M618 160.500L636.500 144M446 171.500L480 141.500" fill="none" />
      <path d="M538.300 151.300L555.500 134L558.500 134.500L541.500 151.500Z" fill="#999" />
      <path d="M397.700 168L448.300 173.700M481.300 143.900L621.500 161.300M538.300 151.300V293.700M621.500 161.300V304" fill="none" strokeWidth="1.900" />
      <path d="M461.700 297L469.700 290.300V295L461.700 301.500Z" fill="#d4c2a9" strokeWidth="1.700" />
    </g>
    <Handle x={499} y={280.500} /><Handle x={568.700} y={289.500} />

    {/* upper straight section */}
    <g stroke="#000" strokeWidth="1.100" strokeLinejoin="round">
      <path d="M733.700 155.300L940 181.300L922 198.700L714.700 173Z" fill="#e4e4e4" />
      <path d="M714.700 173.200L797.300 183.700V326.300L714.700 315.700Z" fill="#dfccb0" />
      <path d="M797.300 183.700L859.700 191.700V333.700L797.300 326.300Z" fill="#dfccb0" />
      <path d="M859.700 191.700L922 198.700V341.700L859.700 333.700Z" fill="#dfccb0" />
      <path d="M922 198.700L940.200 181.500V324.300L922 341.700Z" fill="#d9d9d9" />
      <path d="M717.500 172.500L736 156M919 197.500L937 181.500" fill="none" />
      <path d="M797 183.500L814 166L817.500 166.500L800 184Z" fill="#999" />
      <path d="M714.700 173.300L922 198.900V341.700M797.300 183.700V326.300" fill="none" strokeWidth="2" />
      <path d="M859.700 191.700V333.700" strokeWidth="1.500" />
    </g>
    <Handle x={745} y={311.300} /><Handle x={817.700} y={320.300} /><Handle x={879.700} y={328.300} />

    {/* base units */}
    <g filter="url(#oak)" fill="#b8aaa0">
      <path d="M397.700 409.700L445.500 415.500L444.500 543L397.700 537.300Z" />
      <path d="M446 416L466 401V511L463.700 525.300L444.500 543Z" fill="#a4958b" />
      <path d="M465 400L608 418V528L465 511Z" />
      <path d="M608 510.300L701 521V540L608 528Z" />
      <path d="M701 429.700L908.700 455V566L701 540Z" />
    </g>
    <path d="M463.700 510.700L909.300 565.700V580.300L463.700 525.300Z" fill="#a69990" />
    <g stroke="#000" strokeWidth="1.200" fill="none" strokeLinejoin="round">
      <path d="M611 417L643 421V479.500L611 510Z" fill="#d9d9d9" />
      <path d="M643 479.300L654.300 481V483.500L656.500 485.700L700 491.300V520L611 509.500Z" fill="#e4e4e4" />
      <path d="M643 420V479.500M700 430V520" />
      <path d="M397.700 409.700V537.300L444.500 543L463.700 525.300L909.300 580.300V565.700L463.700 510.700L444.500 528" />
      <path d="M444.500 416V543M446.800 416V526M465 401V511M463.700 511V525M525.300 409V532.300" />
      <path d="M524.500 409V518M607.700 419V528M609.700 419V510M701.300 430V540M784 440V550M846 447V558" strokeWidth="1.600" />
      <path d="M525.300 430.300L607.300 440.300M525.300 474.300L607.300 484.300M701.300 452L784 462.300M701.300 496L784 506.300" strokeWidth="1.500" />
      <path d="M608 510.300L701 521.300" strokeWidth="1.900" />
      <path d="M909 454.700L940.300 423.500V535L909 563.500Z" fill="#d9d9d9" />
      <path d="M909 561L940 532" />
      <path d="M908.700 454V580" strokeWidth="2.100" />
      <path d="M452 420L460 414V418L452 425Z" strokeWidth="1.800" />
    </g>
    <Handle x={482} y={410.700} fill="#b5a79d" />
    <Handle x={555} y={420} fill="#b5a79d" /><Handle x={555} y={443.500} fill="#b5a79d" /><Handle x={555} y={487.500} fill="#b5a79d" />
    <Handle x={643.300} y={521.700} fill="#b5a79d" />
    <Handle x={731.300} y={442} fill="#b5a79d" /><Handle x={731.300} y={465.300} fill="#b5a79d" /><Handle x={731.300} y={509.300} fill="#b5a79d" />
    <Handle x={804} y={450.700} fill="#b5a79d" /><Handle x={866} y={458.300} fill="#b5a79d" />
    <path d="M931.500 541H935.500V548H937.500V553H929V549H932Z" fill="#f0128c" stroke="#f0128c" strokeWidth="1.500" />
    <path d="M933.500 541V548M930.500 551H936" stroke="#222" strokeWidth="1.500" />
    <path d="M910 566V579" stroke="#f0128c" strokeWidth="1" />

    {/* worktops */}
    <path d="M449 356.300L500.700 363L467 394.700L449.700 410.300L397.700 404Z" fill="#dbc9a8" filter="url(#stoneSpot)" />
    <path d="M500.700 363L940.300 417L906.700 449.500L467 394.700Z" fill="#d8c8aa" filter="url(#stone)" />
    <path d="M397.700 404L449.700 410.300L467 394.700L906.700 449.500L940.300 417V423.500L907.500 454.900L467 401L449.700 416.300L397.700 409.700Z" fill="#dcbf90" filter="url(#stoneSpot)" />
    <g stroke="#000" strokeWidth="1.200" fill="none" strokeLinejoin="round">
      <path d="M449 356.300L940.300 417V423.500L907.500 454.900L467 401L449.700 416.300L397.700 409.700V404Z" />
      <path d="M397.700 404L449.700 410.300L467 394.700L500.700 363M467 394.700L906.700 449.500L940.300 417M449.700 410.300V416.300M467 394.700V401M906.900 449.500V455" />
    </g>
  </svg>
);

/* ---------- data ---------- */
const MENU = ["Файл", "Правка", "Группировка", "Выделение", "Удалить", "Изделие", "Настройка", "Инструменты", "Скрипты", "Окно", "Справка"];
const PROPS: [string, string][] = [
  ["Наименование", "Гор кухня"], ["Артикул", ""], ["Материалы", ""], ["Замена материалов", "<Нет схемы>"], ["Сечения и разрезы", "0 плоскостей"], ["Пользовательские", "0 шт."],
];
type Node = { icon: string; name: string; size?: string; pos?: string; plus?: boolean; dim?: boolean };
const TREE: Node[] = [
  { icon: "treeFrame", name: "Габаритная рамка", dim: true },
  { icon: "treePanel", name: "Фронтальная2", size: "400x100x16", pos: "54" },
  { icon: "treeBlock", name: "Блок3", plus: true },
  { icon: "treeBlock", name: "Блок4", plus: true },
  { icon: "treeBlock", name: "Блок5", plus: true },
  { icon: "treeBlock", name: "Блок6", plus: true },
  { icon: "treeBlock", name: "Блок7", plus: true },
  { icon: "treePanel", name: "Фронтальная2", size: "340x100x16", pos: "55" },
  { icon: "treePanel", name: "Фронтальная2", size: "2470x100x16", pos: "48" },
  { icon: "treeLeg", name: "Ножка регулируемая 100...125 мм", pos: "72", plus: true },
];
const HISTORY: [number, string][] = [
  [563, "Установка 2x4"], [564, "Удаление вспомогател"],
  ...[565, 566, 567, 568, 569, 570, 571, 572, 573].map((n): [number, string] => [n, "Создание вспомогател"]),
  ...[574, 575, 576, 577].map((n): [number, string] => [n, "Редактирование конту"]),
  [578, "Расстановка позиций"], [579, "Редактирование парам"], [580, "Редактирование парам"], [581, "Удаление вспомогател"],
];
const LEFT_BAR = ["sel", "vboard", "hboard", "front", "arc", "fill", "splitV", "splitH", "|", "plank", "mirrorG", "wave", "|", "cut", "|", "sphere", "pyramid", "|", "panel", "drawer", "crate"];
const RIGHT_BAR = ["screenR", "orangeGo", "|", "screw", "screwGo", "screwX", "|", "board", "boardGo", "boardX", "|", "blueCube", "grayCube", "|", "groove", "grooveGo", "grooveX"];

const Coord = ({ axis, value, id }: { axis: string; value: string; id: string }) => (
  <div className="flex items-center gap-1">
    <label htmlFor={id}>{axis}</label>
    <input id={id} defaultValue={value} className="h-[13px] w-[39px] border border-[#a5a5a5] bg-white pl-px outline-none" />
  </div>
);

const Strip = ({ items, label, className }: { items: string[]; label: string; className: string }) => (
  <nav aria-label={label} className={"flex shrink-0 flex-col items-center self-start " + BAR + " " + className}>
    {items.map((n, i) => (n === "|" ? <HSep key={i} /> : (
      <button key={i} type="button" aria-label={label + " " + (i + 1)} className="flex w-full flex-1 items-center justify-center"><Ico n={n} className="size-[15px]" /></button>
    )))}
  </nav>
);

const Group = ({ children, className = "" }: { className?: string } & Kids) => (
  <div className={"flex h-[21px] shrink-0 items-center justify-between px-px " + BAR + " " + className}>{children}</div>
);

export default function App() {
  return (
    <div className={"flex min-h-screen flex-col overflow-hidden font-['Roboto',sans-serif] text-[7px] leading-[9px] text-[#111] " + METAL}>
      <header className="flex h-[14px] shrink-0 items-center gap-[2px] bg-linear-to-r from-[#83a6cc] to-[#b9d1eb] pr-px pl-[2px]">
        <Ico n="logo" className="size-[11px]" />
        <h1 className="flex-1 text-[8px]">БАЗИС-Мебельщик 11 - [Гор кухня]</h1>
        {["min", "restore", "close"].map((n) => (
          <button key={n} type="button" aria-label={n} className="-ml-[2px] flex h-[11px] w-3 items-center justify-center border border-white border-r-[#666] border-b-[#666] bg-[#ececec] last:ml-0"><Ico n={n} className="size-2" /></button>
        ))}
      </header>

      <nav aria-label="Меню" className="flex h-[15px] shrink-0 items-center border-t border-white bg-[#e6e6e6] bg-[repeating-linear-gradient(180deg,rgba(255,255,255,0.4)_0px,rgba(0,0,0,0.01)_4px,rgba(255,255,255,0.3)_8px)] pr-[5px] pl-[6px]">
        <ul className="flex gap-[10px]">{MENU.map((m) => <li key={m}><a href="#menu">{m}</a></li>)}</ul>
        <div className="ml-auto flex items-center gap-[7px]">
          <span className="h-2 w-px bg-[#aaa]" /><a href="#lang">Language</a><span className="h-2 w-px bg-[#aaa]" />
          <button type="button" className="mr-px flex items-center gap-[2px]">По умолчанию <Ico n="down" className="size-[5px]" /></button>
          <div className="flex items-center gap-1"><Ico n="min" className="size-[7px]" /><Ico n="restore" className="size-2" /><Ico n="close" className="size-2" /></div>
        </div>
      </nav>

      <div className="flex h-[22px] shrink-0 items-start gap-px overflow-hidden">
        <Group className="w-[140px]">
          <TB n="new" label="Создать" /><Drop label="Создать: ещё" /><TB n="open" label="Открыть" /><Drop label="Открыть: ещё" />
          <TB n="save" label="Сохранить" /><TB n="print" label="Печать" /><Sep /><TB n="undo" label="Отменить" /><TB n="redo" label="Вернуть" />
        </Group>
        <Group className="ml-[2px] w-[181px]">
          <TB n="axes" label="Оси" /><TB n="dots" label="Сетка" /><TB n="corner" label="Углы" on /><TB n="magnet" label="Привязка" on /><TB n="segment" label="Отрезок" on />
          <TB n="ruler" label="Линейка" /><Drop label="Линейка: ещё" /><TB n="layerPick" label="Выбор слоя" on /><TB n="camPick" label="Выбор вида" on /><TB n="cubeGreen" label="Габарит" on />
        </Group>
        <Group className="ml-[3px] w-[341px] pr-[3px] pl-[3px]">
          <span>Ш</span><Select label="Ширина" value="10" className="w-[39px]" />
          <span>ШС</span><Select label="Ширина слоя" value="32" muted className="w-[39px]" />
          <Sep /><TB n="layers" label="Слои" />
          <Select label="Слой" value="Модель" className="w-[111px]" left={<span className="flex items-center gap-[5px] pl-[3px]"><Ico n="bulb" className="size-[9px]" /><Ico n="lock" className="size-[9px]" /><span className="size-[11px] bg-black" /></span>} />
          <span>Цвет линии</span>
          <button type="button" aria-label="Цвет линии" className="flex h-[14px] w-[42px] items-center gap-[2px] border border-[#bbb] bg-white pl-[2px]"><span className="h-px flex-1 bg-black" /><Ico n="down" className="size-[6px]" /></button>
        </Group>
        <Group className="ml-[3px] w-[199px]">
          <TB n="folders" label="Папки" /><Sep /><TB n="scissors" label="Раскрой" /><TB n="scissorsBeta" label="Раскрой бета" /><TB n="wardrobe" label="Шкаф" /><TB n="leg" label="Опора" />
          <TB n="box" label="Упаковка" /><TB n="sigma" label="Смета" /><TB n="link" label="Связь" /><TB n="shapes" label="Фигуры" /><TB n="cloudEye" label="Облако" />
        </Group>
        <Group className="w-[79px]"><TB n="fit" label="Вписать" /><TB n="fitAll" label="Вписать всё" /><TB n="zoomIn" label="Увеличить" /><TB n="brush" label="Обновить" /></Group>
        <Group className="w-[138px]">
          <TB n="tree" label="Структура" on /><TB n="note" label="Свойства" on /><TB n="wall" label="Материалы" on /><TB n="hist" label="История" on /><TB n="find" label="Анализ" on /><TB n="cabinets" label="Библиотека" /><TB n="book" label="Справочник" />
        </Group>
        <Group className="w-[17px]" />
      </div>

      <Group className="w-[155px] pr-1 pl-[3px]"><Coord axis="X" value="-2575,714" id="cx" /><Coord axis="Y" value="14341,692" id="cy" /><Coord axis="Z" value="0" id="cz" /></Group>

      <div className="flex h-[21px] shrink-0 items-start">
        <Group className="w-[135px] pl-1"><TB n="sketch" label="Эскиз" /><Sep /><TB n="line" label="Линия" /><TB n="angle" label="Угол" /><TB n="circle" label="Окружность" /><TB n="hexagon" label="Многоугольник" /><TB n="dim" label="Размер" /></Group>
        <Group className="ml-[3px] w-[360px] pr-[3px]">
          <TB n="vLeft" label="Слева" on /><TB n="vFront" label="Спереди" /><TB n="vTop" label="Сверху" /><TB n="vPersp" label="Аксонометрия" on /><TB n="vWire" label="Перспектива" /><TB n="vMove" label="Ориентация" />
          <Sep /><TB n="rotate" label="Поворот" /><Sep /><TB n="wood1" label="Текстура" /><TB n="wood2" label="Текстура с рёбрами" on /><TB n="box1" label="Без линий" /><TB n="box2" label="Невидимые линии" /><TB n="box3" label="Каркас" />
          <TB n="panes" label="Виды" /><Sep /><TB n="camera" label="Камера" /><TB n="vray" label="Рендер" /><TB n="bulbBig" label="Свет" /><Drop label="Свет: ещё" /><TB n="cabinets" label="Сцена" /><Drop label="Сцена: ещё" />
        </Group>
      </div>
      <Group className="w-[165px]"><TB n="mirror" label="Симметрия" /><TB n="mv" label="Сдвиг" /><TB n="rot" label="Вращение" /><Sep /><TB n="align" label="Выравнивание" /><TB n="grid9" label="Массив" /><TB n="scatter" label="Разнести" /><Sep /><TB n="doc" label="Лист" /><TB n="docs" label="Листы" /></Group>

      <main className="flex flex-1 items-stretch">
        <Strip items={LEFT_BAR} label="Панели" className="h-[337px] w-[22px]" />

        <aside className="ml-px flex w-[249px] shrink-0 flex-col border-x border-[#a5a5a5] bg-white">
          <section className="flex h-[118px] shrink-0 flex-col">
            <PanelHead title="Анализ модели" />
            <div className={"flex h-[21px] items-center gap-[5px] px-[3px] " + BAR}>
              <Ico n="wrench" className="size-[14px]" /><button type="button">Проверить модель</button><button type="button">Показать скрытые ошибки</button>
            </div>
            <div className="flex-1 border-t border-l border-[#777] bg-white" />
            <div className="h-[12px] border-t border-[#bbb] bg-[#efefef]" />
          </section>
          <section className="flex h-[147px] shrink-0 flex-col">
            <PanelHead title="Свойства" />
            <Select label="Объект" value="Модель" className="m-px mx-[2px]" />
            <div className="flex-1 border-t border-l border-[#777]">
              <table className="w-full table-fixed border-collapse text-left">
                <thead><tr className="h-3 bg-[#ececec]"><th className="w-[142px] border-r border-b border-[#aaa] pl-[3px] font-normal">Параметр</th><th className="border-b border-[#aaa] pl-[3px] font-normal">Значение</th></tr></thead>
                <tbody>{PROPS.map(([k, v]) => <tr key={k} className="h-[14px] border-b border-[#f1f1f1]"><td className="border-r border-[#f1f1f1] pl-3">{k}</td><td className="pl-[6px]">{v}</td></tr>)}</tbody>
              </table>
            </div>
          </section>
          <section className="flex shrink-0 flex-col">
            <PanelHead title="Структура модели" />
            <div className={"flex h-[21px] items-center px-px " + BAR}>
              <TB n="wrench" label="Настройка" /><TB n="addN" label="Добавить" /><TB n="askN" label="Найти" /><TB n="nodeN" label="Узел" /><TB n="delN" label="Удалить" />
              <span className="mx-1 flex"><Sep /></span><TB n="preview" label="Просмотр" on /><TB n="eye" label="Видимость" /><Drop label="Видимость: ещё" />
            </div>
            <div className="border-b-2 border-l border-b-[#444] border-l-[#888] pt-px">
              <div className="flex h-[12px] items-center border-y border-[#aaa] bg-[#ececec]"><span className="flex-1 pl-[3px]">Объект</span><span className="w-[26px] border-l border-[#888] pl-[3px]">Поз.</span></div>
              <div className="flex h-[127px]">
                <div className="flex min-w-0 flex-1 flex-col pb-[3px]">
                  <div className="flex flex-1 items-center gap-[5px] pl-[6px]"><span className="flex size-[5px] items-center border border-[#999]"><span className="h-px w-full bg-[#222]" /></span><span>Гор кухня</span></div>
                  <ul className="flex flex-[10] flex-col bg-[linear-gradient(#bbb,#bbb)] bg-[length:1px_100%] bg-[position:20px_0px] bg-no-repeat">
                    {TREE.map((t, i) => (
                      <li key={i} className="flex flex-1 items-center pl-[18px]">
                        <span className="mr-px flex w-[8px] items-center">
                          {t.plus ? <svg viewBox="0 0 7 7" className="size-[7px]" aria-hidden="true"><path d="M.5 .5H5.500V5.500H.5Z" fill="#fff" stroke="#999" /><path d="M1.500 3H4.500M3 1.500V4.500" stroke="#111" /></svg> : <span className="ml-[2px] h-px w-full bg-[#bbb]" />}
                        </span>
                        <Ico n={t.icon} className="size-[10px]" />
                        <span className={"ml-[3px] whitespace-nowrap " + (t.dim ? "text-[#b5b5b5]" : "")}>{t.name}</span>
                        {t.size && <span className="ml-[5px] text-[#888]">{t.size}</span>}
                        <span className="ml-auto pr-px">{t.pos}</span>
                      </li>
                    ))}
                  </ul>
                </div>
                <Scroll thumb="h-[37px]" />
              </div>
            </div>
          </section>
          <div className="flex-1 bg-white" />
        </aside>

        <section className="ml-1 flex min-w-0 flex-1 flex-col">
          <div className="flex-1 bg-white"><Kitchen /></div>
          <div className={"flex h-4 shrink-0 items-center " + BAR}>
            {["Евгений", "Кухня Григорьев", "Гор кухня"].map((t, i) => (
              <div key={t} className={"flex h-full items-center gap-2 border-r border-[#aab] px-[3px] " + (i === 2 ? "border-l border-l-[#aab] bg-[#e3e3e6] pr-1" : "")}>
                <button type="button">{t}</button><button type="button" aria-label={"Закрыть " + t}><Ico n="close" className="size-[6px] opacity-70" /></button>
              </div>
            ))}
            <div className="ml-auto flex items-center gap-[5px] border-l border-[#999] px-1">
              {["left", "right", "dblUp"].map((n) => <button key={n} type="button" aria-label={n}><Ico n={n} className="size-[7px]" /></button>)}
            </div>
          </div>
        </section>

        <aside className="ml-[2px] flex w-[113px] shrink-0 flex-col border-x border-[#a5a5a5] bg-[#f1f1f1] pt-px">
          <PanelHead title="Файлы" />
          <div className="flex h-[15px] shrink-0 items-center pl-px"><span className="w-[31px]">Раздел</span><Select label="Раздел" value="Фрагменты" className="w-[60px]" /><Ico n="down" className="ml-[7px] size-2" /></div>
          <div className="flex h-[20px] shrink-0 items-center pl-px"><span className="w-[30px]">Папка</span><Select label="Папка" value="Фрагмент" className="w-[44px]" />
            <button type="button" aria-label="Вверх по папкам" className="ml-[3px]"><Ico n="upFolder" className="size-3" /></button><button type="button" aria-label="Поиск" className="ml-[5px]"><Ico n="magnify" className="size-3" /></button></div>
          <div className="flex h-[214px] shrink-0 border border-[#777] border-r-[#ddd] border-b-[#ddd] bg-white">
            <ul className="flex min-w-0 flex-1 flex-col overflow-hidden pt-[3px]">
              {["2Д-фрагменты", "Firmax", "Future", "IKM30"].map((f, i) => <li key={f} className={"flex w-[58px] shrink-0 flex-col items-center gap-[5px] " + (i < 3 ? "h-[57px]" : "")}><Ico n="folder" className="size-[23px]" /><a href="#folder" className="whitespace-nowrap">{f}</a></li>)}
            </ul>
            <Scroll thumb="h-[20px]" />
          </div>
          <div className="mt-[2px]"><PanelHead title="История" /></div>
          <div className="flex h-[209px] shrink-0 overflow-hidden border-t border-l border-[#777] bg-white">
            <ol className="-mt-[5px] flex min-w-0 flex-1 flex-col overflow-hidden">
              {HISTORY.map(([n, t]) => <li key={n} className={"flex flex-1 items-center border-b border-[#f0f0f0] pl-[5px] whitespace-nowrap " + (n === 581 ? "bg-[#777] text-white" : "")}><span className="w-[18px] shrink-0">{n}:</span>{t}</li>)}
            </ol>
            <div className="flex"><Scroll thumb="mt-auto h-[38px]" /></div>
          </div>
        </aside>
        <div className="ml-px"><Strip items={RIGHT_BAR} label="Крепёж" className="h-[262px] w-[21px]" /></div>
      </main>

      <footer className="flex h-[18px] shrink-0">
        <div className={"flex w-[158px] items-center pl-1 " + BAR}><button type="button" aria-label="Справка" className="flex size-[13px] items-center justify-center bg-[#4b4b96] text-[11px] font-bold text-white">?</button></div>
      </footer>
    </div>
  );
}
